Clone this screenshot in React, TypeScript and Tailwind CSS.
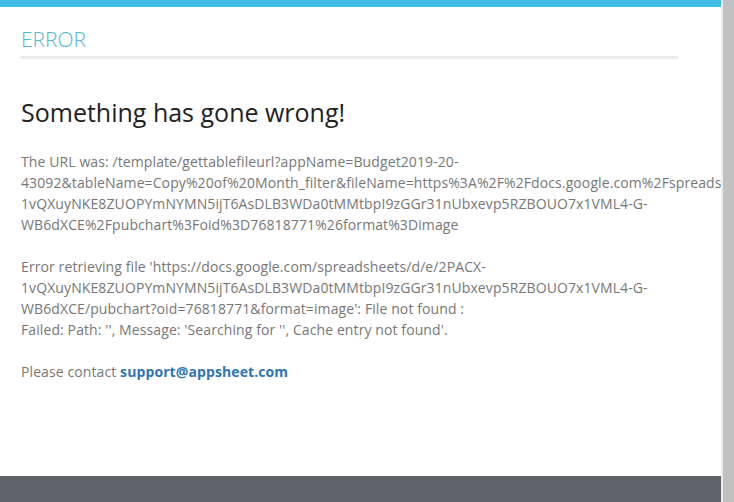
export default function App() {
  return (
    <div className="flex h-[502px] w-[734px] overflow-hidden bg-white font-['Open_Sans',sans-serif]">
      <div className="relative flex min-w-0 flex-1 flex-col overflow-hidden">
        <div className="h-[7px] shrink-0 bg-[#41bde6]" />
        <div className="flex-1 px-[21px]">
          <h2 className="mt-[18px] w-[657px] border-b-[3px] border-[#ebebeb] pb-[2px] text-[21px] leading-[29px] font-light text-[#55b5d6]">
            ERROR
          </h2>
          <h1 className="mt-[35px] text-[25px] leading-[36px] text-[#222]">Something has gone wrong!</h1>
          <div className="mt-[21px] w-[657px] text-[14px] leading-[21px] tracking-[0.1px] text-[#777]">
            <p>
              The URL was:
              /template/gettablefileurl?appName=Budget2019-20-43092&amp;tableName=Copy%20of%20Month_filter&amp;fileName=https%3A%2F%2Fdocs.google.com%2Fspreadsheets%2Fd%2Fe%2F2PACX-1vQXuyNKE8ZUOPYmNYMN5ijT6AsDLB3WDa0tMMtbpI9zGGr31nUbxevp5RZBOUO7x1VML4-G-WB6dXCE%2Fpubchart%3Foid%3D76818771%26format%3Dimage
            </p>
            <p className="mt-[21px]">
              Error retrieving file
              'https://docs.google.com/spreadsheets/d/e/2PACX-1vQXuyNKE8ZUOPYmNYMN5ijT6AsDLB3WDa0tMMtbpI9zGGr31nUbxevp5RZBOUO7x1VML4-G-WB6dXCE/pubchart?oid=76818771&amp;format=image':
              File not found :
              <br />
              Failed: Path: '', Message: 'Searching for '', Cache entry not found'.
            </p>
            <p className="mt-[21px]">
              Please contact{" "}
              <a href="#" className="font-bold text-[#2f74b5]">
                support@appsheet.com
              </a>
            </p>
          </div>
        </div>
        <div className="h-[26px] shrink-0 bg-[#5c636b]" />
      </div>
      <div className="w-[13px] shrink-0 border-l-2 border-[#ececec] bg-[#c1c1c1]" />
    </div>
  );
}
